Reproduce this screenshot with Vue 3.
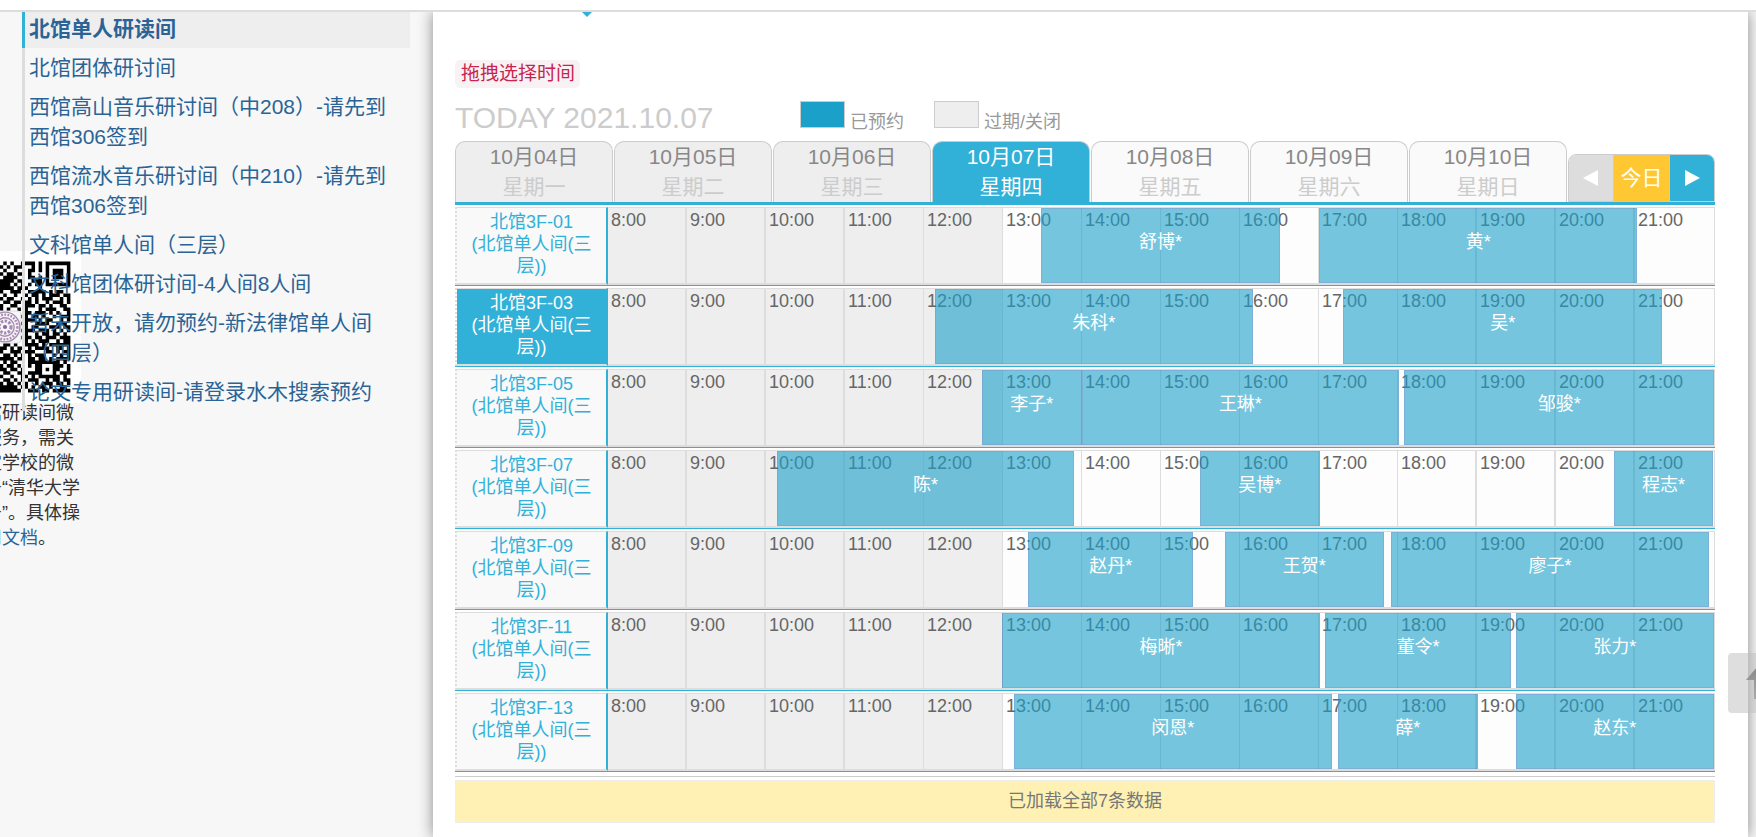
<script setup>
const rooms = [
  '北馆单人研读间',
  '北馆团体研讨间',
  '西馆高山音乐研讨间（中208）-请先到西馆306签到',
  '西馆流水音乐研讨间（中210）-请先到西馆306签到',
  '文科馆单人间（三层）',
  '文科馆团体研讨间-4人间8人间',
  '暂未开放，请勿预约-新法律馆单人间（四层）',
  '论文专用研读间-请登录水木搜索预约',
]

const days = [
  { date: '10月04日', week: '星期一', state: 'past' },
  { date: '10月05日', week: '星期二', state: 'past' },
  { date: '10月06日', week: '星期三', state: 'past' },
  { date: '10月07日', week: '星期四', state: 'active' },
  { date: '10月08日', week: '星期五', state: '' },
  { date: '10月09日', week: '星期六', state: '' },
  { date: '10月10日', week: '星期日', state: '' },
]

const hours = Array.from({ length: 14 }, (_, i) => i + 8)

// Bookings: [start, end, name], in hours after 8:00
const schedule = [
  { no: '01', items: [[5.48, 8.51, '舒博*'], [9, 13.03, '黄*']] },
  { no: '03', hot: true, items: [[4.14, 8.16, '朱科*'], [9.31, 13.34, '吴*']] },
  { no: '05', items: [[4.73, 6, '李子*'], [6, 10.01, '王琳*'], [10.08, 14, '邹骏*']] },
  { no: '07', items: [[2.14, 5.9, '陈*'], [7.49, 9.01, '吴博*'], [12.73, 13.99, '程志*']] },
  { no: '09', items: [[5.32, 7.41, '赵丹*'], [7.81, 9.82, '王贺*'], [9.91, 13.94, '廖子*']] },
  { no: '11', items: [[4.99, 9.01, '梅晰*'], [9.08, 11.43, '董令*'], [11.49, 14, '张力*']] },
  { no: '13', items: [[5.14, 9.16, '闵恩*'], [9.24, 11.01, '薛*'], [11.49, 14, '赵东*']] },
]

const pos = ([a, b]) => ({ left: (a / 14) * 100 + '%', width: ((b - a) / 14) * 100 + '%' })

// Right-hand part of the QR code, columns 17 to 36
const qr = [
  '01010011110101111111',
  '10101110010101000001',
  '01001000110101011101',
  '10110110100001011101',
  '01111000110101011101',
  '11110110011101000001',
  '11101010101101111111',
  '11110111000100000000',
  '10011100111110101100',
  '01001001011010111011',
  '10110010101011100101',
  '01101101101001011101',
  '10011001110110100110',
  '10100101000101110011',
  '00000001101110101001',
  '00000011011010010111',
  '00000001110101100101',
  '00000011001111001110',
  '00000001011000111011',
  '00000011110111010101',
  '00000001001011011010',
  '00000011101101110111',
  '00000001010111001011',
  '01101001111010111111',
  '11010110101111001101',
  '10011101110001101011',
  '01101010101110010101',
  '11110110110110101111',
  '01011000111111111010',
  '10110100101100011101',
  '11011010001101011001',
  '01100110111100010111',
  '10010011010111111010',
  '01101010111001011011',
  '10110101001011101101',
  '11111011010110100110',
  '11111100111011011111',
]
const qrPath = qr
  .map((row, y) => [...row].map((c, x) => (c === '1' ? `M${x + 17} ${y}h1v1h-1z` : '')).join(''))
  .join('')
</script>

<template>
  <div class="page">
    <header class="top"></header>
    <div class="body">
      <aside class="side">
        <div class="wechat">
          <svg class="qr" viewBox="-3 -3 43 43" aria-hidden="true">
            <rect x="-3" y="-3" width="43" height="43" fill="#fff" />
            <path :d="qrPath" fill="#000" />
            <rect x="14" y="14" width="9" height="9" rx="1" fill="#f7f7f7" stroke="#ddd" stroke-width=".3" />
            <g fill="none" stroke="#a98bb5">
              <circle cx="18.5" cy="18.5" r="4.2" stroke-width=".4" />
              <circle cx="18.5" cy="18.5" r="3.5" stroke-width=".7" stroke-dasharray=".5 .4" />
              <circle cx="18.5" cy="18.5" r="2.6" stroke-width=".4" />
              <circle cx="18.5" cy="18.5" r="1.7" stroke-width=".9" stroke-dasharray=".7 .4" />
            </g>
            <circle cx="18.5" cy="18.5" r=".6" fill="#8d659e" />
          </svg>
          <p>
            馆研读间微<br />服务，需关<br />定学校的微<br />号“清华大学<br />号”。具体操<br /><a href="#">用文档</a>。
          </p>
        </div>
        <nav class="rooms">
          <a v-for="(r, i) in rooms" :key="r" href="#" :class="{ on: i === 0 }">{{ r }}</a>
        </nav>
      </aside>

      <main class="main">
        <svg class="caret" width="10" height="5" viewBox="0 0 10 5" aria-hidden="true">
          <path d="M0 0h10L5 5z" fill="#31b0d8" />
        </svg>
        <span class="tip">拖拽选择时间</span>
        <div class="bar">
          <h1>TODAY 2021.10.07</h1>
          <span class="key"><i class="swatch booked"></i>已预约</span>
          <span class="key"><i class="swatch"></i>过期/关闭</span>
        </div>
        <div class="days">
          <button v-for="d in days" :key="d.date" type="button" class="day" :class="d.state">
            <span>{{ d.date }}</span><span class="week">{{ d.week }}</span>
          </button>
          <div class="pager">
            <button type="button" class="prev" aria-label="前一周">
              <svg width="16" height="16" viewBox="0 0 16 16"><path d="M15 0v16L0 8z" fill="#fff" /></svg>
            </button>
            <button type="button" class="now">今日</button>
            <button type="button" class="next" aria-label="后一周">
              <svg width="16" height="16" viewBox="0 0 16 16"><path d="M1 0v16l15-8z" fill="#fff" /></svg>
            </button>
          </div>
        </div>

        <section class="rows">
          <div v-for="s in schedule" :key="s.no" class="row">
            <a href="#" class="name" :class="{ hot: s.hot }">北馆3F-{{ s.no }}<br />(北馆单人间(三层))</a>
            <div class="line">
              <div v-for="h in hours" :key="h" class="hour" :class="{ past: h < 13 }">{{ h }}:00</div>
              <div v-for="b in s.items" :key="b[0]" class="booking" :style="pos(b)">{{ b[2] }}</div>
            </div>
          </div>
        </section>
        <p class="loaded">已加载全部7条数据</p>
      </main>
    </div>

    <button type="button" class="totop" aria-label="返回顶部">
      <svg width="24" height="34" viewBox="0 0 24 34">
        <defs>
          <linearGradient id="arrow" x1="0" y1="0" x2="0" y2="1">
            <stop offset="0" stop-color="#888" />
            <stop offset="1" stop-color="#aaa" />
          </linearGradient>
        </defs>
        <path d="M12 0l12 14h-8v19H8V14H0z" fill="url(#arrow)" />
      </svg>
    </button>
  </div>
</template>

<style>
body {
  background: #f7f7f7;
}
</style>

<style scoped>
.page {
  min-height: 100vh;
  display: flex;
  flex-direction: column;
  overflow: hidden;
  position: relative;
  font: 18px/22px "Liberation Sans", "Noto Sans CJK SC", sans-serif;
  color: #666;
  box-sizing: border-box;
}
.page * {
  box-sizing: border-box;
}
button {
  font: inherit;
  border: 0;
  padding: 0;
  cursor: pointer;
}
a {
  color: #2a6496;
  text-decoration: none;
}
.top {
  height: 12px;
  background: #fff;
  border-bottom: 2px solid #ddd;
  position: relative;
  z-index: 3;
}
.body {
  flex: 1;
  display: grid;
  grid-template-columns: 433px 1fr;
  padding-right: 8px;
}

.side {
  position: relative;
}
.wechat {
  position: absolute;
  left: -71px;
  top: 239px;
  width: 152px;
}
.qr {
  display: block;
  width: 152px;
  height: 152px;
}
.wechat p {
  margin: -2px -20px 0 55px;
  line-height: 25px;
  color: #333;
  white-space: nowrap;
}
.rooms {
  position: relative;
  margin: -3px 23px 0 22px;
  font-size: 21px;
  line-height: 30px;
}
.rooms a {
  display: block;
  padding: 5px 8px 4px 4px;
  border-left: 3px solid #ddd;
}
.rooms .on {
  background: #eee;
  border-color: #31b0d8;
  font-weight: bold;
}

.main {
  position: relative;
  background: #fff;
  box-shadow: 0 0 14px #888;
  padding: 48px 33px 14px 22px;
}
.caret {
  position: absolute;
  left: 149px;
  top: 0;
}
.tip {
  display: block;
  width: max-content;
  padding: 0 5px 0 6px;
  border-radius: 5px;
  background: #f9f2f4;
  color: #c7254e;
  font-size: 19px;
  line-height: 28px;
}
.bar {
  display: flex;
  align-items: baseline;
  height: 53px;
  padding-top: 13px;
  color: #999;
}
h1 {
  flex: 0 0 345px;
  margin: 0;
  font-size: 30px;
  line-height: 34px;
  font-weight: normal;
  color: #ccc;
}
.key {
  margin-right: 30px;
}
.swatch {
  display: inline-block;
  width: 45px;
  height: 27px;
  margin-right: 5px;
  border: 1px solid #ccc;
  background: #eee;
}
.booked {
  background: #1aa0c9;
}

.days {
  display: flex;
  border-bottom: 3px solid #31b0d8;
}
.day {
  flex: 1;
  margin-right: 1px;
  border: 1px solid #ccc;
  border-bottom: 0;
  border-radius: 10px 10px 0 0;
  background: #fafafa;
  color: #888;
  font-size: 21px;
  line-height: 30px;
}
.day span {
  display: block;
}
.week {
  color: #ccc;
}
.past {
  background: #eee;
}
.day.active,
.active .week {
  background: #31b0d8;
  color: #fff;
}
.pager {
  display: flex;
  align-self: flex-end;
  height: 48px;
  border: 1px solid #ccc;
  border-radius: 8px 8px 0 0;
  overflow: hidden;
  color: #fff;
}
.pager button {
  width: 44px;
  display: flex;
  align-items: center;
  justify-content: center;
  color: #fff;
  font-size: 21px;
}
.pager .prev {
  background: #ddd;
}
.pager .now {
  width: 57px;
  background: #ffc833;
  border: solid #ccc;
  border-width: 0 1px;
}
.pager .next {
  background: #31b0d8;
}

.rows {
  padding-top: 2px;
  border-bottom: 1px solid #ccc;
  padding-bottom: 2px;
}
.row {
  display: flex;
  border-bottom: 1px solid #31b0d8;
  margin-bottom: 2px;
}
.name {
  flex: 0 0 153px;
  padding: 3px 10px 4px;
  border: solid #ddd;
  border-width: 1px 2px 2px;
  border-left-style: dotted;
  border-right-color: #31b0d8;
  background: #f9f9f9;
  color: #31b0d8;
  text-align: center;
}
.hot {
  background: #31b0d8;
  background-clip: padding-box;
  color: #fff;
}
.line {
  flex: 1;
  position: relative;
  display: grid;
  grid-template-columns: repeat(14, 1fr);
  border: solid #ddd;
  border-width: 1px 1px 2px 0;
  min-height: 78px;
}
.hour {
  padding: 1px 0 0 3px;
  background: #fdfdfd;
  border-right: 1px solid #ddd;
}
.hour:nth-child(-n + 3),
.hour:nth-child(n + 11) {
  border-right-width: 2px;
}
.hour:nth-child(14) {
  border-right: 0;
}
.hour.past {
  background: #eee;
}
.booking {
  position: absolute;
  top: 0;
  bottom: 0;
  padding-top: 22px;
  border: 1px solid rgba(40, 125, 190, 0.6);
  background: rgba(26, 160, 201, 0.6);
  background-clip: padding-box;
  color: #fff;
  text-align: center;
}
.loaded {
  margin: 3px 0 0;
  padding: 9px 0;
  border: 1px dotted #eee;
  background: #fff1b3;
  color: #777;
  text-align: center;
  line-height: 23px;
}

.totop {
  position: absolute;
  z-index: 4;
  right: -32px;
  top: 653px;
  width: 60px;
  height: 60px;
  border-radius: 4px;
  background: rgba(190, 190, 190, 0.5);
}
.totop svg {
  display: block;
  margin: 0 auto;
}
</style>
